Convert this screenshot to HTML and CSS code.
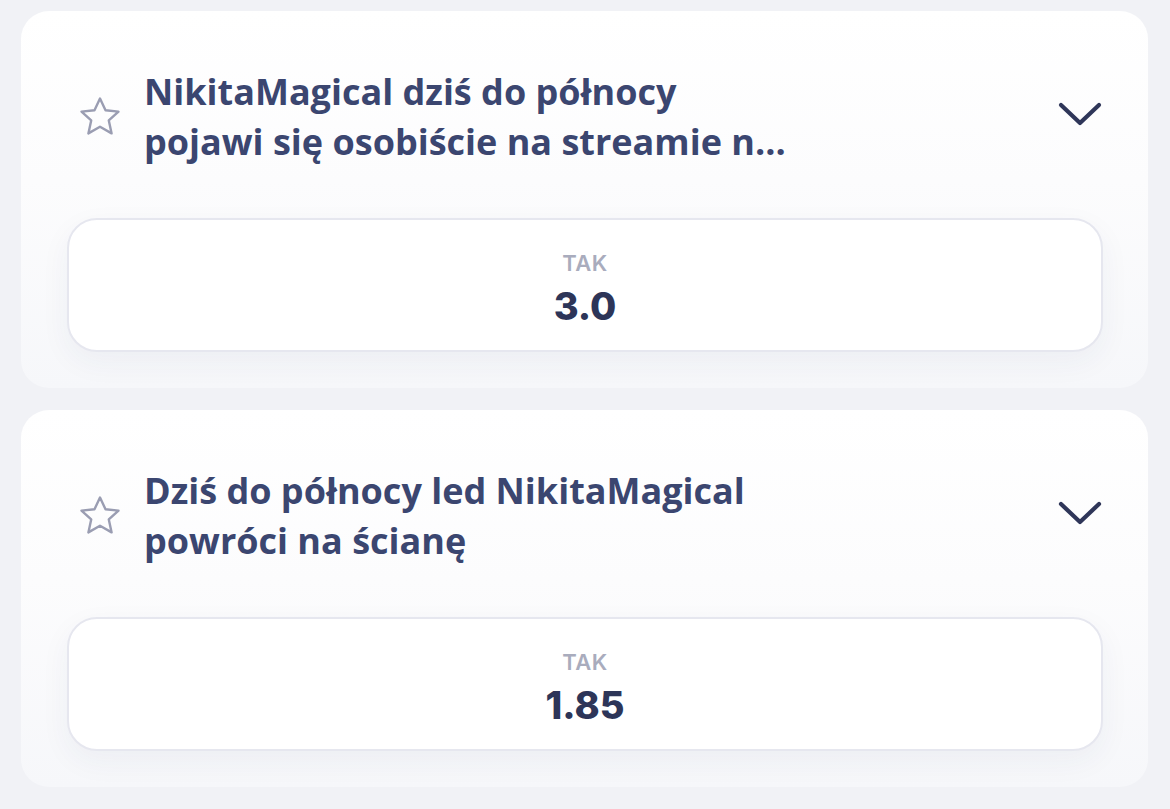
FILE: index.html
```html
<!DOCTYPE html>
<html lang="pl">
<head>
<meta charset="utf-8">
<link rel="stylesheet" href="styles.css">
</head>
<body>
<div class="list">
  <section class="card">
    <div class="header">
      <svg class="star" viewBox="0 0 44 42" width="44" height="42"><path d="M22 2.5 L27.5 14.3 L40.5 15.6 L30.8 24.4 L33.6 37.4 L22 30.8 L10.4 37.4 L13.2 24.4 L3.5 15.6 L16.5 14.3 Z" fill="none" stroke="#9a9db2" stroke-width="2.4" stroke-linejoin="round"/></svg>
      <h2 class="title">NikitaMagical dziś do północy<br>pojawi się osobiście na streamie n...</h2>
      <svg class="chevron" viewBox="0 0 44 26" width="44" height="26"><path d="M3 3 L22 21 L41 3" fill="none" stroke="#2f3659" stroke-width="4.2" stroke-linecap="round" stroke-linejoin="round"/></svg>
    </div>
    <button class="odd">
      <span class="label">TAK</span>
      <span class="value">3.0</span>
    </button>
  </section>
  <section class="card">
    <div class="header">
      <svg class="star" viewBox="0 0 44 42" width="44" height="42"><path d="M22 2.5 L27.5 14.3 L40.5 15.6 L30.8 24.4 L33.6 37.4 L22 30.8 L10.4 37.4 L13.2 24.4 L3.5 15.6 L16.5 14.3 Z" fill="none" stroke="#9a9db2" stroke-width="2.4" stroke-linejoin="round"/></svg>
      <h2 class="title">Dziś do północy led NikitaMagical<br>powróci na ścianę</h2>
      <svg class="chevron" viewBox="0 0 44 26" width="44" height="26"><path d="M3 3 L22 21 L41 3" fill="none" stroke="#2f3659" stroke-width="4.2" stroke-linecap="round" stroke-linejoin="round"/></svg>
    </div>
    <button class="odd">
      <span class="label">TAK</span>
      <span class="value">1.85</span>
    </button>
  </section>
</div>
</body>
</html>
```
FILE: styles.css
```css
html, body {
  margin: 0;
  background: #f1f2f6;
}
body {
  padding: 11px 22px 0 21px;
  font-family: "Open Sans", "Noto Sans", sans-serif;
}
.list {
  display: flex;
  flex-direction: column;
  gap: 22px;
}
.card {
  background: linear-gradient(180deg, #ffffff 0%, #fcfcfd 45%, #f6f7fa 100%);
  border-radius: 28px;
  padding: 0 45px 36px 46px;
  height: 377px;
  box-sizing: border-box;
}
.header {
  display: flex;
  align-items: center;
  height: 207px;
  padding-top: 5px;
  box-sizing: border-box;
}
.star {
  flex: none;
  margin-left: 11px;
  margin-right: 22px;
}
.title {
  flex: 1;
  margin: 0;
  font-size: 36px;
  line-height: 50px;
  font-weight: 700;
  color: #3b4670;
}
.chevron {
  flex: none;
  margin-right: 1px;
  margin-top: -4px;
}
.odd {
  display: flex;
  flex-direction: column;
  align-items: center;
  justify-content: center;
  width: 100%;
  height: 134px;
  background: #ffffff;
  border: 2px solid #e6e7ef;
  border-radius: 30px;
  box-shadow: 0 10px 30px rgba(40, 50, 100, 0.05);
  font-family: "Inter", sans-serif;
  cursor: pointer;
  padding: 10px 0 0;
}
.label {
  font-size: 22px;
  font-weight: 600;
  letter-spacing: 0.5px;
  color: #a9acbd;
  line-height: 26px;
}
.value {
  font-size: 38px;
  font-weight: 800;
  color: #2d3558;
  line-height: 48px;
  margin-top: 6px;
}
```
